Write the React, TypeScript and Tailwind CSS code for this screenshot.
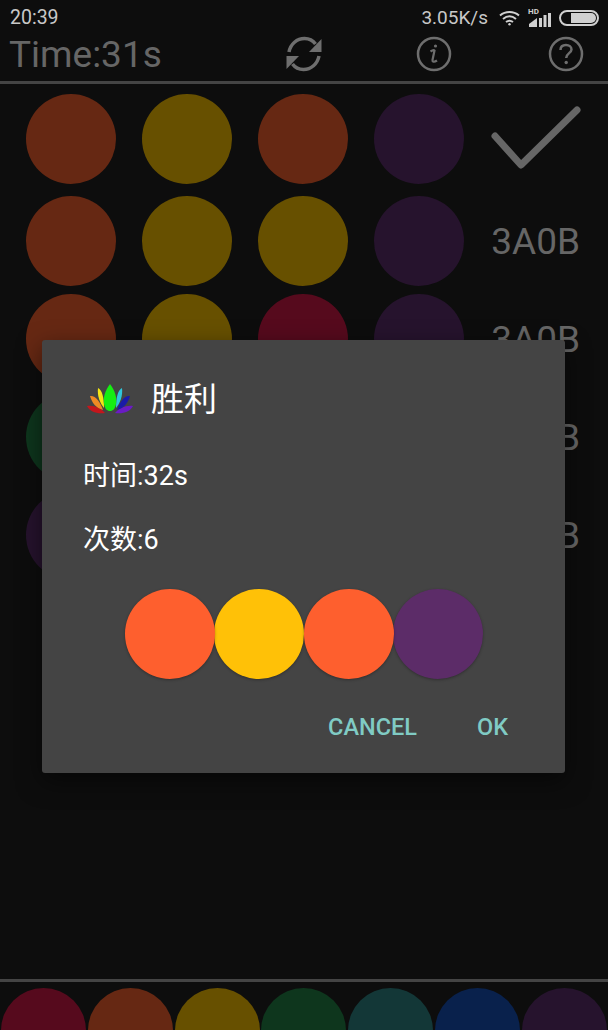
const FONT = "font-['Roboto','Noto_Sans_CJK_SC',sans-serif]";

const DIM = {
  red: "bg-[#560a1d]",
  orange: "bg-[#662813]",
  yellow: "bg-[#675000]",
  green: "bg-[#0e361d]",
  teal: "bg-[#133737]",
  blue: "bg-[#09214c]",
  purple: "bg-[#26132d]",
};

const ROWS = [
  { colors: [DIM.orange, DIM.yellow, DIM.orange, DIM.purple], h: "h-[102px]", result: null },
  { colors: [DIM.orange, DIM.yellow, DIM.yellow, DIM.purple], h: "h-[98px]", result: "3A0B" },
  { colors: [DIM.orange, DIM.yellow, DIM.red, DIM.purple], h: "h-[98px]", result: "3A0B" },
  { colors: [DIM.green, DIM.yellow, DIM.orange, DIM.purple], h: "h-[98px]", result: "2A1B" },
  { colors: [DIM.purple, DIM.yellow, DIM.orange, DIM.teal], h: "h-[98px]", result: "1A1B" },
];

const PALETTE = [DIM.red, DIM.orange, DIM.yellow, DIM.green, DIM.teal, DIM.blue, DIM.purple];

function StatusBar() {
  return (
    <div className="flex h-[33px] items-center pl-[10px] pr-[9px] pt-[2px] text-[#c8c8c8]">
      <span className="text-[19.500px] leading-none">20:39</span>
      <span className="ml-auto text-[19px] leading-none">3.05K/s</span>
      <svg className="ml-[11px]" width="21" height="16" viewBox="0 0 21 16" fill="none" stroke="#d0d0d0" strokeWidth="2">
        <path d="M1 5.5C6.5 .8 14.5 .8 20 5.5" />
        <path d="M4 9C8 5.7 13 5.7 17 9" />
        <path d="M7 12C9 10.5 12 10.500 14 12" />
        <circle cx="10.500" cy="14.300" r="1.200" fill="#d0d0d0" stroke="none" />
      </svg>
      <div className="relative ml-[8px] h-[20px] w-[24px]">
        <span className="absolute left-0 top-0 text-[8px] font-bold leading-none text-[#d0d0d0]">HD</span>
        <svg className="absolute bottom-0 left-0" width="24" height="16" viewBox="0 0 24 16" fill="#d0d0d0">
          <path d="M1 12L9 6V15H1Z" />
          <rect x="11" y="6" width="3" height="9" />
          <rect x="15.500" y="3" width="3" height="12" />
          <rect x="20" y="1" width="3" height="14" />
        </svg>
      </div>
      <div className="ml-[7px] flex h-[16px] w-[40px] items-center rounded-full border-2 border-[#d0d0d0] p-[1px]">
        <div className="ml-[9px] h-full flex-1 rounded-r-full bg-[#d0d0d0]" />
      </div>
    </div>
  );
}

function Header() {
  return (
    <div className="relative h-[51px] shrink-0 border-b-[3px] border-[#444444]">
      <div className="flex h-full items-center pb-[6px]">
        <span className="ml-[9px] text-[37px] leading-none text-[#666666]">Time:31s</span>
        <svg className="ml-[123px]" width="38" height="38" viewBox="0 0 38 38" fill="none" stroke="#6e6e6e" strokeWidth="3.500">
          <path d="M4 17C5.500 9 12 3.500 19.500 3.500C24 3.500 28 5.500 30.500 9" />
          <path d="M34 21C32.500 29 26 34.500 18.500 34.500C14 34.500 10 32.500 7.500 29" />
          <path d="M36.500 4V17H24Z" fill="#6e6e6e" stroke="none" />
          <path d="M1.500 34V21H14Z" fill="#6e6e6e" stroke="none" />
        </svg>
        <svg className="ml-[93px]" width="36" height="36" viewBox="0 0 36 36" fill="none" stroke="#6e6e6e">
          <circle cx="18" cy="18" r="16" strokeWidth="2.500" />
          <path d="M14.500 15.500C16 14.500 18 14 18.500 14.500L16.500 24C16.300 26 18 26.500 21 24.500" strokeWidth="2.200" />
          <circle cx="19.500" cy="10" r="1.600" fill="#6e6e6e" stroke="none" />
        </svg>
        <svg className="ml-[96px]" width="36" height="36" viewBox="0 0 36 36" fill="none" stroke="#6e6e6e">
          <circle cx="18" cy="18" r="16" strokeWidth="2.500" />
          <path d="M12.500 14C12.500 10.500 15 9 18 9C21 9 23.500 11 23.500 13.500C23.500 17 18.200 17.500 18.200 22" strokeWidth="2.500" />
          <circle cx="18.200" cy="26.500" r="1.700" fill="#6e6e6e" stroke="none" />
        </svg>
      </div>
    </div>
  );
}

function Check() {
  return (
    <svg className="-mr-[2px]" width="92" height="66" viewBox="0 0 92 66" fill="none" stroke="#666666" strokeWidth="7" strokeLinecap="round" strokeLinejoin="round">
      <path d="M5 30L31 59L87 4" />
    </svg>
  );
}

function Board() {
  return (
    <div className="flex-1 pt-[10px]">
      {ROWS.map((row, i) => (
        <div key={i} className={`flex items-start pl-[26px] ${row.h}`}>
          <div className="flex gap-[26px]">
            {row.colors.map((color, j) => (
              <div key={j} className={`size-[90px] rounded-full ${color}`} />
            ))}
          </div>
          <div className="flex h-[90px] flex-1 items-center justify-end pr-[28px] text-[37px] leading-none text-[#666666]">
            {row.result ?? <Check />}
          </div>
        </div>
      ))}
    </div>
  );
}

function Lotus() {
  return (
    <svg width="48" height="32" viewBox="0 0 48 32">
      <path d="M1 23C8 22 15 25 19 30C11 31 4 29 1 23Z" fill="#c4161c" />
      <path d="M47 23C40 22 33 25 29 30C37 31 44 29 47 23Z" fill="#6a1bc4" />
      <path d="M4 13C9 12 14 18 17 27C10 25 6 20 4 13Z" fill="#ef8a24" />
      <path d="M44 13C39 12 34 18 31 27C38 25 42 20 44 13Z" fill="#1a1aa8" />
      <path d="M12 5C16 7 18 14 18 25C14 20 11 13 12 5Z" fill="#f5e616" />
      <path d="M36 5C32 7 30 14 30 25C34 20 37 13 36 5Z" fill="#2fc6dc" />
      <path d="M24 1C29 8 31 14 30 21C29 26 27 28 24 28C21 28 19 26 18 21C17 14 19 8 24 1Z" fill="#16ee12" />
    </svg>
  );
}

function WinDialog() {
  return (
    <div className="absolute left-[42px] top-[340px] flex h-[433px] w-[523px] flex-col rounded-[3px] bg-[#444444] shadow-[0_8px_24px_rgba(0,0,0,0.5)]">
      <div className="mt-[43px] flex h-[32px] items-center pl-[44px]">
        <Lotus />
        <span className="ml-[17px] text-[33px] leading-none text-white">胜利</span>
      </div>
      <p className="ml-[41px] mt-[47px] text-[27px] leading-[28px] text-white">时间:32s</p>
      <p className="ml-[41px] mt-[36px] text-[27px] leading-[28px] text-white">次数:6</p>
      <div className="ml-[83px] mt-[35px] flex">
        <div className="z-10 size-[90px] rounded-full bg-[#fe5f2e] shadow-[0_1px_3px_rgba(0,0,0,0.3)]" />
        <div className="-ml-px size-[90px] rounded-full bg-[#ffc107] shadow-[0_1px_3px_rgba(0,0,0,0.3)]" />
        <div className="z-10 size-[90px] rounded-full bg-[#fe5f2e] shadow-[0_1px_3px_rgba(0,0,0,0.3)]" />
        <div className="-ml-px size-[90px] rounded-full bg-[#5c2c68] shadow-[0_1px_3px_rgba(0,0,0,0.3)]" />
      </div>
      <div className="mr-[57px] mt-[34px] flex justify-end gap-[60px] text-[23.500px] font-medium leading-[28px] text-[#80cbc4]">
        <span>CANCEL</span>
        <span>OK</span>
      </div>
    </div>
  );
}

function Palette() {
  return (
    <div className="h-[51px] shrink-0 overflow-hidden border-t-[3px] border-[#444444] pt-[6px]">
      <div className="grid grid-cols-7">
        {PALETTE.map((color, i) => (
          <div key={i} className="flex justify-center">
            <div className={`size-[85px] shrink-0 rounded-full ${color}`} />
          </div>
        ))}
      </div>
    </div>
  );
}

export default function App() {
  return (
    <div className={`relative flex h-[1030px] w-[608px] flex-col overflow-hidden bg-[#0d0d0d] ${FONT}`}>
      <StatusBar />
      <Header />
      <Board />
      <Palette />
      <WinDialog />
    </div>
  );
}
